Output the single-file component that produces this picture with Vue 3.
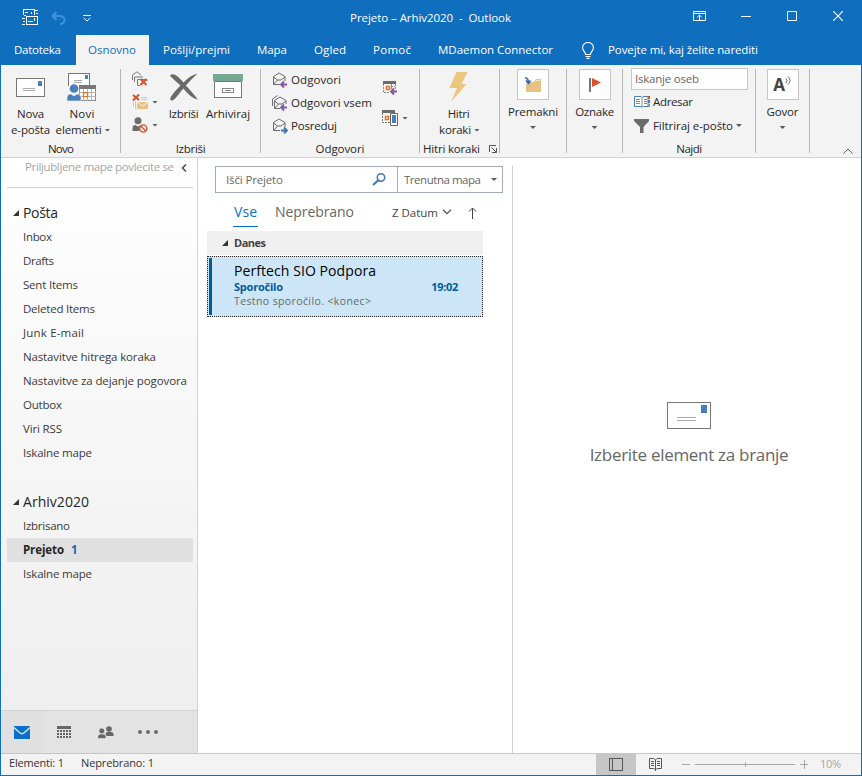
<script setup>
import { ref } from 'vue'

// Adjusts the tracking of a label so that it spans the given width.
const vFit = {
  mounted(el, { value }) {
    const range = document.createRange()
    range.selectNodeContents(el)
    const natural = range.getBoundingClientRect().width
    const count = el.textContent.length
    if (count > 1) el.style.letterSpacing = ((value - natural) / (count - 1)).toFixed(3) + 'px'
  },
}

const tabs = [
  { name: 'Datoteka', fit: 47, cls: 't-file' },
  { name: 'Osnovno', fit: 48, cls: 't-home active' },
  { name: 'Pošlji/prejmi', fit: 67, cls: 't-send' },
  { name: 'Mapa', fit: 30, cls: 't-folder' },
  { name: 'Ogled', fit: 32, cls: 't-view' },
  { name: 'Pomoč', fit: 38, cls: 't-help' },
  { name: 'MDaemon Connector', fit: 115, cls: 't-conn' },
]
const mailFolders = [
  ['Inbox', 29], ['Drafts', 31], ['Sent Items', 55], ['Deleted Items', 72], ['Junk E-mail', 61],
  ['Nastavitve hitrega koraka', 133], ['Nastavitve za dejanje pogovora', 164], ['Outbox', 39],
  ['Viri RSS', 39], ['Iskalne mape', 69],
]
const archiveFolders = [
  { name: 'Izbrisano', fit: 47 },
  { name: 'Prejeto', fit: 41, count: 1 },
  { name: 'Iskalne mape', fit: 69 },
]
const selected = ref('Prejeto')
</script>

<template>
  <div class="window">
    <header class="titlebar">
      <div class="quick">
        <svg class="q-mail" width="18" height="17" viewBox="0 0 18 17" fill="none" stroke="#fff" shape-rendering="crispEdges">
          <path d="M1.500 6V.5h11V6M13 1.500h3M14 4.500h2M3 3.500h3M9.500 2.500v2M0 9.500h3M1 12.500h2M0 15.500h3M4.500 7.500h11v8h-11zM6 12.500h5M12.500 9v3M1.500 6.500h2" />
        </svg>
        <svg class="q-undo" width="15" height="14" viewBox="0 0 15 14" fill="none" stroke="#3f93de" stroke-width="2">
          <path d="M5.500 1 1.500 5l4 4M2 5h7c6 0 6 8 0 8" />
        </svg>
        <svg width="8" height="8" viewBox="0 0 8 8" fill="none" stroke="#fff"><path d="M0 1.500h8M.7 4 4 7l3.300-3" /></svg>
      </div>
      <div class="title"><span v-fit="161">Prejeto – Arhiv2020&nbsp; -&nbsp; Outlook</span></div>
      <div class="controls">
        <svg width="13" height="10" viewBox="0 0 13 10" fill="none" stroke="#fff"><path d="M.5.5h12v9H.5zM.5 2.500h12M6.500 9V4M4.300 6.200l2.200-2.200 2.200 2.200" /></svg>
        <svg width="10" height="10" viewBox="0 0 10 10" stroke="#fff"><path d="M0 5.500h10" /></svg>
        <svg width="10" height="10" viewBox="0 0 10 10" fill="none" stroke="#fff"><path d="M.5.5h9v9h-9z" /></svg>
        <svg width="10" height="10" viewBox="0 0 10 10" stroke="#fff" stroke-width="1.200"><path d="m0 0 10 10M10 0 0 10" /></svg>
      </div>
    </header>

    <nav class="tabs">
      <button v-for="t in tabs" :key="t.name" class="tab" :class="t.cls"><span v-fit="t.fit">{{ t.name }}</span></button>
      <button class="tab tell">
        <svg width="12" height="17" viewBox="0 0 12 17" fill="none" stroke="#fff" stroke-width="1.100">
          <path d="M3.500 12.500c0-3-2.900-3.500-2.900-7a5.400 5 0 0 1 10.800 0c0 3.500-2.900 4-2.900 7zM3.500 14.500h5M4.500 16.400h3" />
        </svg>
        <span v-fit="150">Povejte mi, kaj želite narediti</span>
      </button>
    </nav>

    <section class="ribbon">
      <div class="group g-new">
        <div class="content">
          <button class="big new-mail">
            <svg width="30" height="30" viewBox="0 0 30 30" shape-rendering="crispEdges">
              <path d="M.5 5.500h28v18H.5z" fill="#fff" stroke="#777" /><path d="M22 8h4v5h-4z" fill="#4a80ba" /><path d="M7 15.500h12M7 17.500h12" stroke="#aaa" />
            </svg>
            <span v-fit="27">Nova</span><span v-fit="39">e-pošta</span>
          </button>
          <button class="big new-items">
            <svg width="30" height="30" viewBox="0 0 30 30">
              <path d="M1.500 13V.5h21V12" fill="#fff" stroke="#777" shape-rendering="crispEdges" /><path d="M18 2h3v4h-3z" fill="#4a80ba" /><path d="M7 7.500h8M7 9.500h8" stroke="#aaa" />
              <path d="M12.500 14.500h16v13h-16z" fill="#fff" stroke="#888" shape-rendering="crispEdges" /><path d="M12 12h17v4H12z" fill="#777" />
              <path d="M12 19.500h17M12 23.500h17M16.500 16v12M20.500 16v12M24.500 16v12" stroke="#b4b4b4" />
              <path d="M16.600 19.600h4v4h-4z" fill="#fff" stroke="#e67320" stroke-width="1.300" />
              <path d="M0 28v-3c0-3 2-4 4-4l3 2 3-2c3 0 4 2 4 4v3z" fill="#4a80ba" stroke="#f3f3f3" stroke-width=".6" /><circle cx="7" cy="15.500" r="4.300" fill="#4a80ba" />
            </svg>
            <span v-fit="25">Novi</span><span class="with-caret"><span v-fit="46">elementi</span><i class="caret"></i></span>
          </button>
        </div>
        <div class="label"><span v-fit="26">Novo</span></div>
      </div>
      <i class="sep"></i>

      <div class="group g-delete">
        <div class="content">
          <div class="minis">
            <div class="mini">
              <svg width="16" height="16" viewBox="0 0 16 16" fill="none" stroke="#777"><path d="M.5 9V4L5 .8 9 4M2.500 11V6H11M5.500 14V8.500H15V10M5.500 14.500H8" /><path d="m8.500 8 6 6M14.500 8l-6 6" stroke="#d35230" stroke-width="2" /></svg>
            </div>
            <div class="mini">
              <svg width="16" height="16" viewBox="0 0 16 16"><path d="M3.500 7v8M1.500 8v5" stroke="#ecc27c" /><path d="M5 8h11v7H5zM9 3h6v1H9zM9 5h6v1H9z" fill="#ecc27c" /><path d="m5 8 5.500 4L16 8" fill="none" stroke="#f3f3f3" /><path d="m1 1 6 5M7 .5 1 6.500" stroke="#d35230" stroke-width="2" /></svg>
              <i class="caret"></i>
            </div>
            <div class="mini">
              <svg width="16" height="16" viewBox="0 0 16 16"><circle cx="6" cy="3.800" r="3.500" fill="#6b6b6b" /><path d="M.5 14v-3c0-2 1-3 3-3l2.500 1.500L9 8l1 1-3 5z" fill="#6b6b6b" /><circle cx="11.300" cy="11.500" r="3.600" fill="#f3f3f3" stroke="#d35230" stroke-width="1.400" /><path d="m8.800 9 5 5" stroke="#d35230" stroke-width="1.400" /></svg>
              <i class="caret"></i>
            </div>
          </div>
          <button class="big delete">
            <svg width="30" height="30" viewBox="0 0 30 30" fill="#6a6a6a"><path d="M.8 2.500C4-1 9 3 14.500 9.500 19 5 24 1.500 28.500.6 24 5 20 9 16.800 12.500 21 17 25 21 28.800 26.500 24 26 19 21 14.300 15.500 9 21.500 6 27.500 2.500 27.500-1.500 26.500 5 19 11.500 12.500 7 8.500 4 6 .8 2.500z" /></svg>
            <span v-fit="30">Izbriši</span>
          </button>
          <button class="big archive">
            <svg width="30" height="30" viewBox="0 0 30 30" shape-rendering="crispEdges"><path d="M1.500 8.500h27v16h-27z" fill="#fff" stroke="#777" /><path d="M0 1h30v7H0z" fill="#75a893" /><path d="M9.500 15.500h11v4h-11zM12 17.500h6" fill="#fff" stroke="#888" /></svg>
            <span v-fit="44">Arhiviraj</span>
          </button>
        </div>
        <div class="label"><span v-fit="30">Izbriši</span></div>
      </div>
      <i class="sep"></i>

      <div class="group g-reply">
        <div class="content">
          <div class="replies">
            <div class="line"><svg width="16" height="16" viewBox="0 0 16 16" fill="none" stroke="#6b6b6b"><path d="M8 12.500H1.500v-8L7 1l6 3.500V9M1.500 5l4 3h3.500l4-3M2 12l3.500-4" /><path d="M9 12.500h6M12 9.500l-3 3 3 3" stroke="#8454a8" stroke-width="1.800" /></svg><span v-fit="50">Odgovori</span></div>
            <div class="line"><svg width="16" height="16" viewBox="0 0 16 16" fill="none" stroke="#6b6b6b"><path d="M.5 11V4l5-3.500M8 13.500H2.500v-8L8 2l6 3.500V9M2.500 6l4 3H10l4-3M3 13l3.500-4" /><path d="M9 12.500h6M12 9.500l-3 3 3 3" stroke="#8454a8" stroke-width="1.800" /></svg><span v-fit="81">Odgovori vsem</span></div>
            <div class="line"><svg width="16" height="16" viewBox="0 0 16 16" fill="none" stroke="#6b6b6b"><path d="M8 12.500H1.500v-8L7 1l6 3.500V9M1.500 5l4 3h3.500l4-3M2 12l3.500-4" /><path d="M9 12.500h6M12 9.500l3 3-3 3" stroke="#3b75b3" stroke-width="1.800" /></svg><span v-fit="46">Posreduj</span></div>
          </div>
          <div class="meetings">
            <svg width="16" height="16" viewBox="0 0 16 16"><path d="M1.500 4v8.500H8M13.500 4v5M9.500 4v5M9 6.500h4" fill="none" stroke="#888" stroke-dasharray="2 1" /><path d="M1 1h13v3H1z" fill="#6b6b6b" /><path d="M4.500 6.500h3v3h-3z" fill="#fff" stroke="#e67320" stroke-width="1.400" /><path d="M9 11.500h6M12 8.500l-3 3 3 3" fill="none" stroke="#8454a8" stroke-width="1.800" /></svg>
            <div class="mini">
              <svg width="16" height="16" viewBox="0 0 16 16"><path d="M.5 3v9.500H8" fill="none" stroke="#777" stroke-dasharray="2 1" /><path d="M0 0h13v3H0z" fill="#6b6b6b" /><path d="M3.500 6.500h3v3h-3z" fill="#fff" stroke="#e67320" stroke-width="1.400" /><path d="M8.500 3.500h7v12h-7z" fill="#fff" stroke="#666" /><path d="M10 5h4v8h-4z" fill="#4a80ba" /></svg>
              <i class="caret"></i>
            </div>
          </div>
        </div>
        <div class="label"><span v-fit="49">Odgovori</span></div>
      </div>
      <i class="sep"></i>

      <div class="group g-quick">
        <div class="content">
          <button class="big">
            <svg width="20" height="30" viewBox="0 0 20 30"><path d="M7.500 0h11l-6 12h5L2 30l6-14H.5z" fill="#edc57d" /></svg>
            <span v-fit="22">Hitri</span><span class="with-caret"><span v-fit="32">koraki</span><i class="caret"></i></span>
          </button>
        </div>
        <div class="label launch"><span v-fit="57">Hitri koraki</span><svg width="8" height="8" viewBox="0 0 8 8" fill="none" stroke="#555"><path d="M.5 7V.5H7M2.500 2.500l5 5M7.500 3v4.500H3" /></svg></div>
      </div>
      <i class="sep"></i>

      <div class="group g-move">
        <button class="boxed">
          <span class="box"><svg width="18" height="18" viewBox="0 0 18 18"><path d="M3 6h7l2-3h5v13H2V9z" fill="#e9c283" /><path d="M12 4.500h4" stroke="#f7e6c8" /><path d="M1 2c3 0 3.500 2 3.500 5M2 4.500l2.500 3 2-3" fill="none" stroke="#2f6eb0" stroke-width="1.600" /></svg></span>
          <span v-fit="50">Premakni</span><i class="caret"></i>
        </button>
      </div>
      <i class="sep"></i>

      <div class="group g-tags">
        <button class="boxed">
          <span class="box"><svg width="18" height="18" viewBox="0 0 18 18"><path d="M4 2v14" stroke="#777" stroke-width="2" /><path d="m6 2 9 4.500L6 11z" fill="#d9532c" /></svg></span>
          <span v-fit="39">Oznake</span><i class="caret"></i>
        </button>
      </div>
      <i class="sep"></i>

      <div class="group g-find">
        <div class="content find">
          <div class="people"><span v-fit="64">Iskanje oseb</span></div>
          <div class="line"><svg width="16" height="14" viewBox="0 0 16 14" fill="none"><path d="M.5 1.500H7l1 1 1-1h5v10H9l-1 1-1-1H.5z" fill="#fff" stroke="#4a80ba" /><path d="M8 2v10M2 4.500h4M2 6.500h4M2 8.500h4M10 4.500h3M10 6.500h3M10 8.500h3" stroke="#888" /><path d="M15 1v3" stroke="#d9532c" stroke-width="2" /><path d="M15 5v3" stroke="#4a80ba" stroke-width="2" /><path d="M15 9v3" stroke="#75a893" stroke-width="2" /></svg><span v-fit="40">Adresar</span></div>
          <div class="line"><svg width="16" height="16" viewBox="0 0 16 16"><path d="M0 1h15v2L9.500 9v6H6V9L0 3z" fill="#6b6b6b" /></svg><span v-fit="80">Filtriraj e-pošto</span><i class="caret"></i></div>
        </div>
        <div class="label"><span v-fit="26">Najdi</span></div>
      </div>
      <i class="sep"></i>

      <div class="group g-speech">
        <button class="boxed">
          <span class="box"><b class="letter">A</b><svg width="7" height="12" viewBox="0 0 7 12" fill="none" stroke="#666"><path d="M1 3.500q2 2 0 4.500M3 1.500q4 4 0 8" /></svg></span>
          <span v-fit="32">Govor</span><i class="caret"></i>
        </button>
      </div>
      <i class="sep"></i>
      <svg class="collapse" width="10" height="6" viewBox="0 0 10 6" fill="none" stroke="#555"><path d="m.5 5.500 4.500-4.500 4.500 4.500" /></svg>
    </section>

    <main class="body">
      <aside class="sidebar">
        <div class="favorites">
          <span class="hint"><span v-fit="149">Priljubljene mape povlecite se</span></span>
          <svg width="6" height="8" viewBox="0 0 6 8" fill="none" stroke="#555" stroke-width="1.600"><path d="M5 .5 1.500 4 5 7.500" /></svg>
        </div>
        <div class="root"><i class="tri"></i><span v-fit="35">Pošta</span></div>
        <div v-for="[name, w] in mailFolders" :key="name" class="folder"><span v-fit="w">{{ name }}</span></div>
        <div class="root second"><i class="tri"></i><span v-fit="66">Arhiv2020</span></div>
        <div v-for="f in archiveFolders" :key="f.name" class="folder" :class="{ selected: f.name === selected }">
          <span v-fit="f.fit">{{ f.name }}</span><span v-if="f.count" class="count">{{ f.count }}</span>
        </div>
        <nav class="modules">
          <div class="module current"><svg width="16" height="13" viewBox="0 0 16 13"><path d="M0 0h16v13H0z" fill="#0a6fc8" /><path d="m0 1.500 5.500 5Q8 9 10.500 6.500l5.500-5" fill="none" stroke="#e0e0e0" stroke-width="1.300" /></svg></div>
          <div class="module"><svg width="14" height="13" viewBox="0 0 14 13" shape-rendering="crispEdges"><path d="M0 0h14v3H0z" fill="#666" /><path d="M0 5h14M0 8h14M0 11h14" stroke="#666" stroke-width="2" stroke-dasharray="2 1" /></svg></div>
          <div class="module"><svg width="16" height="13" viewBox="0 0 16 13" fill="#666"><circle cx="11" cy="3" r="2.800" /><path d="M7.500 8c0-3 8-3 8 0v2h-7z" /><g stroke="#e3e3e3" stroke-width=".7"><circle cx="3.800" cy="5" r="2.900" /><path d="M-.3 12.500V10.500C-.3 7 8 7 8 10.500v2z" /></g></svg></div>
          <div class="module"><svg width="20" height="4" viewBox="0 0 20 4" fill="#666"><circle cx="2" cy="2" r="1.900" /><circle cx="10" cy="2" r="1.900" /><circle cx="18" cy="2" r="1.900" /></svg></div>
        </nav>
      </aside>

      <section class="list">
        <div class="search">
          <div class="query"><span v-fit="57">Išči Prejeto</span><svg width="14" height="13" viewBox="0 0 14 13" fill="none" stroke="#3f78b5"><circle cx="9" cy="4.500" r="3.700" stroke-width="1.500" /><path d="M6.300 7.200 1 12" stroke-width="2" /></svg></div>
          <div class="scope"><span v-fit="77">Trenutna mapa</span><i class="caret"></i></div>
        </div>
        <div class="filters">
          <span class="all"><span v-fit="23">Vse</span></span>
          <span class="unread"><span v-fit="79">Neprebrano</span></span>
          <span class="sort"><span v-fit="46">Z Datum</span></span>
          <svg width="10" height="6" viewBox="0 0 10 6" fill="none" stroke="#555" stroke-width="1.300"><path d="m1 .7 4 4 4-4" /></svg>
          <svg class="arrow" width="9" height="12" viewBox="0 0 9 12" fill="none" stroke="#444"><path d="M4.500 12V1M1 4.500 4.500 1 8 4.500" /></svg>
        </div>
        <div class="day"><i class="tri"></i><span v-fit="32">Danes</span></div>
        <article class="message">
          <div class="from"><span v-fit="142">Perftech SIO Podpora</span></div>
          <div class="subject"><span v-fit="49">Sporočilo</span><span v-fit="27">19:02</span></div>
          <div class="preview"><span v-fit="137">Testno sporočilo. &lt;konec&gt;</span></div>
        </article>
      </section>

      <section class="reading">
        <svg width="44" height="27" viewBox="0 0 44 27" shape-rendering="crispEdges"><path d="M.5.5h43v26H.5z" fill="#fff" stroke="#777" /><path d="M34 3h6v8h-6z" fill="#4a80ba" /><path d="M10 15.500h19M10 18.500h19" stroke="#aaa" /></svg>
        <span v-fit="199">Izberite element za branje</span>
      </section>
    </main>

    <footer class="status">
      <span class="items"><span v-fit="55">Elementi: 1</span></span>
      <span class="unseen"><span v-fit="73">Neprebrano: 1</span></span>
      <div class="views">
        <div class="view on"><svg width="14" height="13" viewBox="0 0 14 13" fill="none" stroke="#555" shape-rendering="crispEdges"><path d="M.5.5h13v12H.5zM3.500 1v11" /></svg></div>
        <div class="view"><svg width="14" height="13" viewBox="0 0 14 13" fill="none" stroke="#555"><path d="M.5.5H5L6.500 2 8 .5h4.500v10H8L6.500 12 5 10.500H.5zM6.500 2v11M2 3.500h3M2 5.500h3M2 7.500h3M8 3.500h3M8 5.500h3M8 7.500h3" /></svg></div>
      </div>
      <svg class="zoom" width="126" height="9" viewBox="0 0 126 9" stroke="#a6a6a6" shape-rendering="crispEdges"><path d="M0 4.500h8M13 4.500h100M63.500 2v5M118 4.500h8M122.500 0v9" /></svg>
      <span class="percent"><span v-fit="21">10%</span></span>
    </footer>
  </div>
</template>

<style>
body { margin: 0; overflow: hidden; }
</style>

<style scoped>
* { box-sizing: border-box; }
.window {
  width: 862px; height: 776px; display: flex; flex-direction: column;
  border: solid #106ebe; border-width: 0 1px 1px; background: #fff;
  font: 11.5px/16px "Open Sans", "Noto Sans", sans-serif; color: #262626; white-space: nowrap;
}
button { font: inherit; color: inherit; border: 0; padding: 0; background: none; }
svg { display: block; flex: none; }
.titlebar { height: 35px; display: grid; grid-template-columns: 300px 1fr 300px; align-items: center; background: #106ebe; color: #fff; }
.quick { display: flex; align-items: center; padding-left: 21px; }
.q-mail { margin-right: 11px; }
.q-undo { margin-right: 17px; }
.title { text-align: center; padding-right: 1px; }
.controls { display: flex; align-items: center; justify-content: flex-end; gap: 36px; padding: 0 18px 3px 0; }
.controls svg:first-child { margin-right: -1px; }

.tabs { height: 30px; display: flex; background: #106ebe; color: #fff; }
.tab { height: 30px; display: flex; align-items: center; }
.t-file { width: 75px; padding-left: 13px; }
.t-home { width: 73px; padding-left: 12px; }
.t-send { width: 108px; padding-left: 14px; }
.t-folder { width: 57px; }
.t-view { width: 59px; }
.t-help { width: 65px; }
.t-conn { width: 144px; }
.active { background: #f3f3f3; color: #106ebe; }
.tell { gap: 14px; }

.ribbon { height: 93px; display: flex; background: #f3f3f3; border-bottom: 1px solid #d2d2d2; }
.sep { width: 1px; height: 84px; margin-top: 4px; background: #b5b5b5; }
.group { display: flex; flex-direction: column; }
.content { height: 76px; display: flex; }
.label { text-align: center; }
.launch { display: flex; align-items: center; gap: 9px; padding-left: 3px; }
.g-new { width: 119px; }
.g-delete { width: 139px; }
.g-reply { width: 158px; }
.g-quick { width: 79px; }
.g-move { width: 66px; }
.g-tags { width: 55px; }
.g-find { width: 132px; }
.g-speech { width: 53px; }
.big { display: flex; flex-direction: column; align-items: center; padding-top: 8px; height: 76px; }
.big > svg { margin-bottom: 3px; }
.new-mail { width: 59px; }
.new-items { width: 48px; margin-left: -2px; }
.with-caret { display: flex; align-items: center; gap: 3px; margin-left: 2px; }
.caret { flex: none; width: 6px; height: 3px; background: #5a5a5a; clip-path: polygon(0 0, 100% 0, 50% 100%); }
.minis { width: 38px; display: flex; flex-direction: column; gap: 7px; padding: 6px 0 0 11px; }
.mini { display: flex; align-items: center; gap: 4px; }
.delete { width: 49px; }
.archive { width: 40px; }
.replies { width: 121px; display: flex; flex-direction: column; gap: 7px; padding: 7px 0 0 11px; }
.line { display: flex; align-items: center; gap: 3px; }
.meetings { display: flex; flex-direction: column; gap: 14px; padding-top: 15px; }
.g-quick .big { width: 77px; padding-top: 7px; }
.g-quick .big > svg { margin-bottom: 4px; }
.boxed { display: flex; flex-direction: column; align-items: center; padding-top: 4px; }
.box { width: 32px; height: 31px; margin-bottom: 4px; display: flex; align-items: center; justify-content: center; background: #fff; border: 1px solid #c6c6c6; }
.boxed .caret { margin-top: 6px; }
.letter { font-size: 17px; color: #444; }
.box .letter + svg { margin-bottom: 8px; }
.find { flex-direction: column; padding: 3px 0 0 8px; }
.people { width: 117px; height: 22px; margin-bottom: 4px; padding: 2px 3px; background: #fff; border: 1px solid #c6c6c6; color: #666; }
.find .line { height: 23px; padding-left: 3px; }
.find .line:nth-child(2) { height: 16px; margin-bottom: 4px; }
.collapse { margin: 83px 0 0 33px; }

.body { height: 595px; display: flex; }
.sidebar { width: 197px; display: flex; flex-direction: column; background: linear-gradient(#fff, #ededed); border-right: 1px solid #d2d2d2; color: #3a3a3a; }
.favorites { height: 30px; margin: 0 4px 0 6px; display: flex; align-items: flex-start; border-bottom: 1px solid #d2d2d2; color: #a6a6a6; }
.hint { width: 151px; margin: 1px 5px 0 18px; }
.favorites svg { margin-top: 6px; }
.root { height: 24px; margin-top: 13px; display: flex; align-items: center; gap: 4px; padding-left: 12px; font-size: 14px; color: #262626; }
.tri { width: 6px; height: 6px; background: #333; clip-path: polygon(100% 0, 100% 100%, 0 100%); }
.folder { height: 24px; margin: 0 4px 0 6px; padding-left: 16px; display: flex; align-items: center; }
.folder.selected { background: #e0e0e0; font-weight: 700; color: #262626; }
.second { margin-top: 25px; }
.count { margin-left: 7px; color: #1667b3; }
.modules { height: 43px; margin-top: auto; display: flex; background: #e3e3e3; border-top: 1px solid #d2d2d2; }
.module { width: 42px; display: grid; place-items: center; }
.current { background: #e0e0e0; }
.list { width: 315px; margin-top: 8px; border-right: 1px solid #d2d2d2; }
.search { width: 288px; height: 27px; margin-left: 17px; display: flex; border: 1px solid #a3abbb; color: #666; }
.query { width: 182px; display: flex; align-items: center; justify-content: space-between; padding: 0 11px 0 10px; border-right: 1px solid #a3abbb; }
.scope { flex: 1; display: flex; align-items: center; justify-content: space-between; padding: 0 5px 0 6px; }
.filters { height: 38px; display: flex; align-items: center; padding-left: 35px; color: #444; }
.all { width: 25px; height: 30px; padding: 5px 0 0 1px; border-bottom: 1px solid #0a72c6; font-size: 14px; line-height: 20px; color: #0a72c6; margin-right: 17px; }
.unread { font-size: 14px; width: 117px; color: #666; }
.sort { width: 50px; padding-top: 1px; }
.arrow { margin: 1px 0 0 16px; }
.day { width: 276px; height: 24px; margin-left: 9px; display: flex; align-items: center; gap: 6px; padding-left: 15px; background: #f0f0f0; font-size: 11px; font-weight: 700; color: #444; }
.message { width: 276px; height: 61px; margin: 1px 0 0 9px; padding: 5px 24px 0 26px; border: 1px dotted #222; background: linear-gradient(#005a9e, #005a9e) 1px 1px / 3px 57px no-repeat #cde6f7; }
.from { font-size: 14px; line-height: 17px; color: #000; }
.subject { display: flex; justify-content: space-between; font-size: 11px; line-height: 15px; font-weight: 700; color: #005a9e; }
.preview { font-size: 10.500px; line-height: 15px; color: #666; }
.reading { flex: 1; padding: 244px 0 0 4px; display: flex; flex-direction: column; align-items: center; gap: 14px; font-size: 17px; line-height: 24px; color: #666; }
.status { height: 22px; display: flex; align-items: center; background: #f3f3f3; border-top: 1px solid #c6c6c6; font-size: 11px; color: #333; }
.items { width: 72px; margin-left: 8px; padding-bottom: 3px; }
.unseen { width: 515px; padding-bottom: 3px; }
.views { display: flex; }
.view { width: 40px; height: 21px; padding-bottom: 1px; display: grid; place-items: center; }
.on { background: #c6c6c6; }
.zoom { margin: 0 0 1px 6px; }
.percent { margin-left: 12px; color: #a6a6a6; padding-bottom: 1px; }
</style>
